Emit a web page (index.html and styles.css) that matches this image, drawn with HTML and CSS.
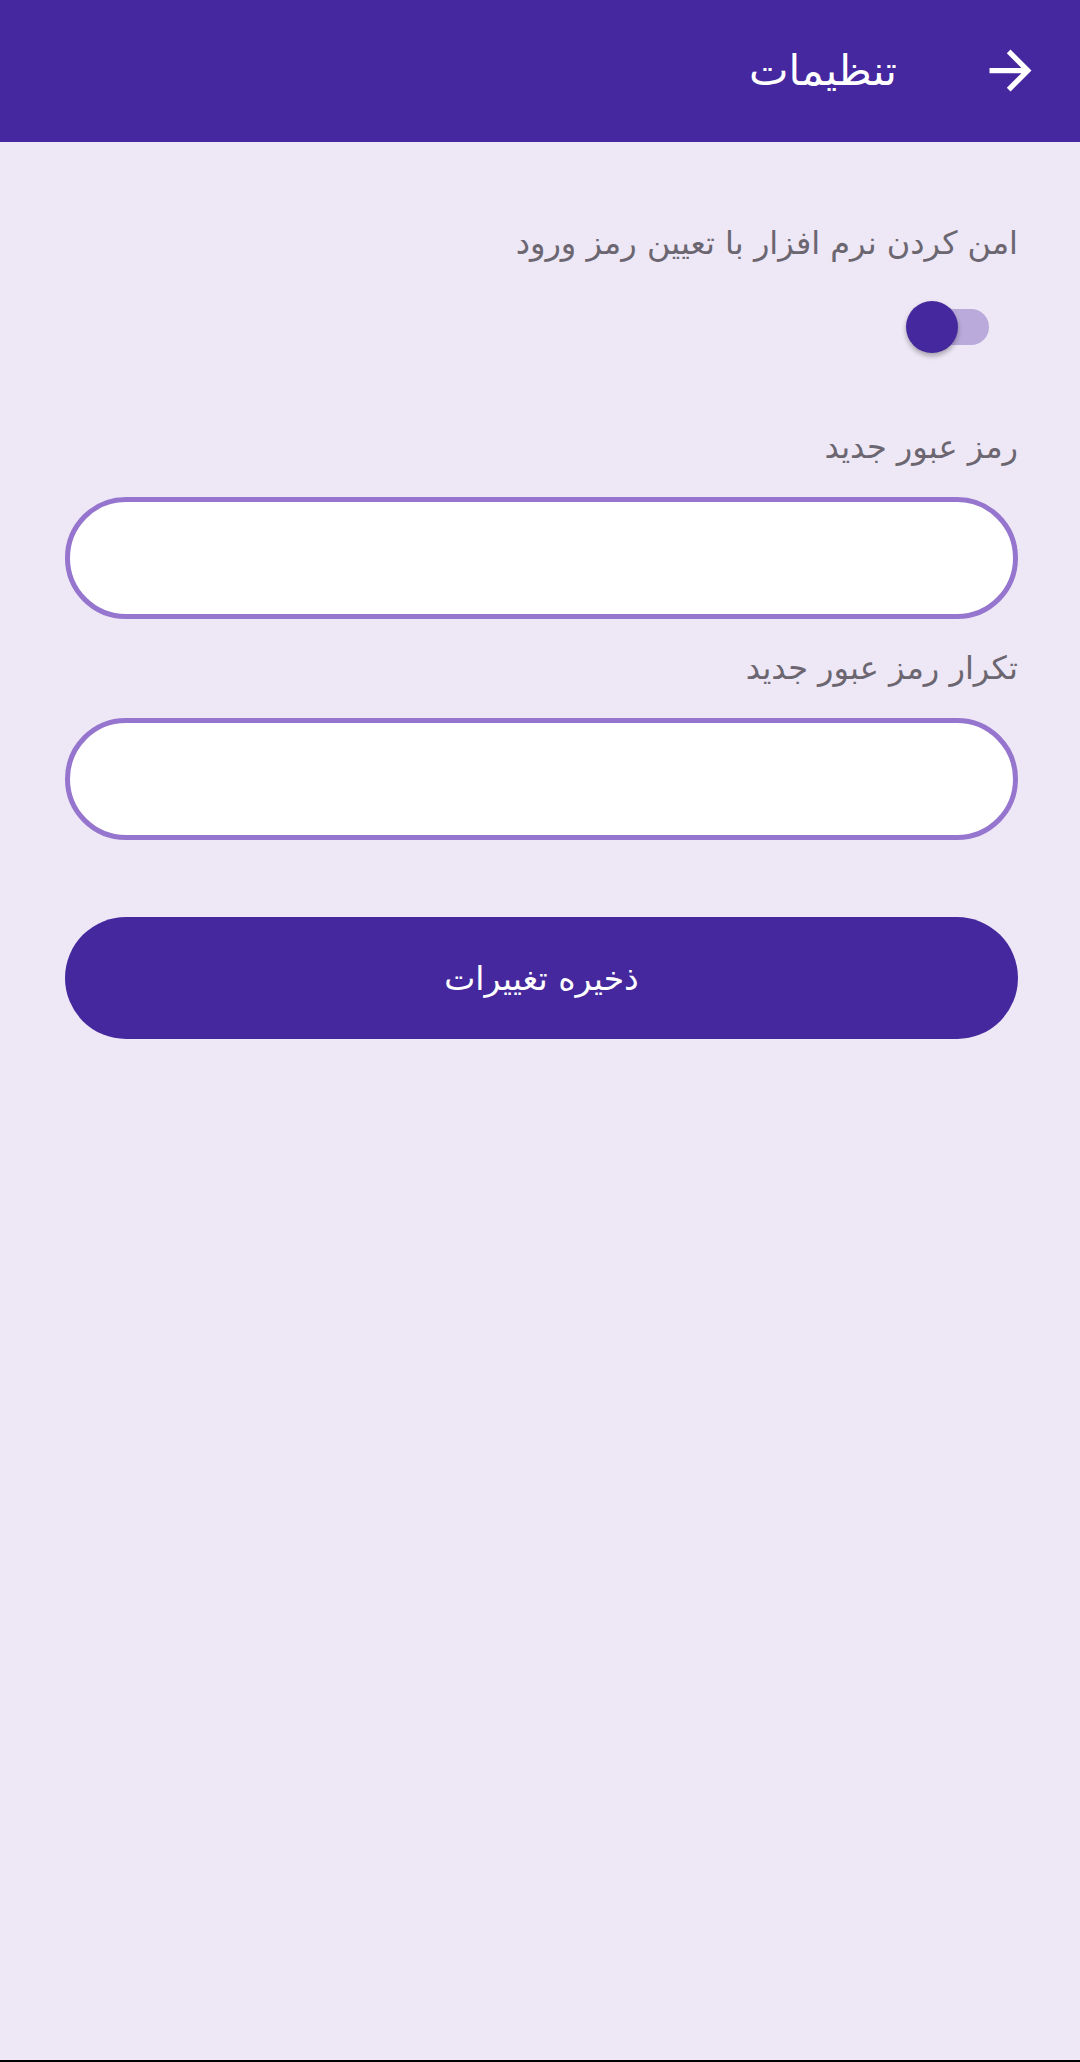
FILE: index.html
```html
<!DOCTYPE html>
<html lang="fa" dir="rtl">
<head>
    <meta charset="UTF-8">
    <meta name="viewport" content="width=device-width, initial-scale=1.0">
    <title>تنظیمات</title>
    <link rel="stylesheet" href="styles.css">
</head>
<body>
    <header class="toolbar">
        <button class="back" type="button" aria-label="بازگشت">
            <svg viewBox="0 0 24 24" width="63" height="63">
                <path fill="#fff" d="M12 4l-1.41 1.41L16.17 11H4v2h12.17l-5.58 5.59L12 20l8-8z"/>
            </svg>
        </button>
        <h1>تنظیمات</h1>
    </header>

    <main class="settings">
        <p class="label first">امن کردن نرم افزار با تعیین رمز ورود</p>
        <div class="switch-row">
            <label class="switch">
                <input type="checkbox" checked>
                <span class="track"></span>
                <span class="thumb"></span>
            </label>
        </div>

        <p class="label spaced">رمز عبور جدید</p>
        <input class="field" type="password">

        <p class="label">تکرار رمز عبور جدید</p>
        <input class="field" type="password">

        <button class="save" type="button">ذخیره تغییرات</button>
    </main>

    <div class="nav-edge"></div>
</body>
</html>
```

FILE: styles.css
```css
html, body {
    margin: 0;
    padding: 0;
}

body {
    font-family: "DejaVu Sans", "Noto Sans", sans-serif;
    background: #ede7f6;
    width: 1080px;
    height: 2062px;
    display: flex;
    flex-direction: column;
    overflow: hidden;
}

.toolbar {
    height: 142px;
    background: #4527a0;
    display: flex;
    align-items: center;
    padding-right: 38px;
    flex-shrink: 0;
}

.toolbar .back {
    background: none;
    border: none;
    padding: 0;
    width: 63px;
    height: 63px;
    display: flex;
    margin-top: -2px;
}

.toolbar h1 {
    margin: 0 82px 0 0;
    color: #fff;
    font-size: 42px;
    font-weight: normal;
    line-height: 1;
}

.settings {
    flex: 1;
    padding: 0 62px 0 62px;
    display: flex;
    flex-direction: column;
}

.label {
    margin: 24px 0 0;
    color: #6b6670;
    font-size: 32px;
    line-height: 50px;
}

.label.first {
    margin-top: 76px;
}

.label.spaced {
    margin-top: 65px;
}

.switch-row {
    margin-top: 29px;
    height: 60px;
    display: flex;
    align-items: center;
    padding-right: 29px;
}

.switch {
    position: relative;
    width: 83px;
    height: 52px;
    display: block;
}

.switch input {
    display: none;
}

.switch .track {
    position: absolute;
    left: 6px;
    right: 0;
    top: 8px;
    height: 36px;
    border-radius: 18px;
    background: #b9aadb;
}

.switch .thumb {
    position: absolute;
    left: 0;
    top: 0;
    width: 52px;
    height: 52px;
    border-radius: 50%;
    background: #45289e;
    box-shadow: 0 3px 5px rgba(0, 0, 0, 0.3);
}

.field {
    box-sizing: border-box;
    margin: 25px 0 0;
    height: 122px;
    width: 953px;
    border: 5px solid #9575cd;
    border-radius: 61px;
    background: #fff;
    outline: none;
    font-family: inherit;
    font-size: 32px;
    padding: 0 40px;
}

.save {
    margin: 77px 0 0;
    width: 953px;
    height: 122px;
    border: none;
    border-radius: 61px;
    background: #45289e;
    color: #fff;
    font-family: inherit;
    font-size: 33px;
}

.nav-edge {
    height: 2px;
    background: #000;
    flex-shrink: 0;
}
```
